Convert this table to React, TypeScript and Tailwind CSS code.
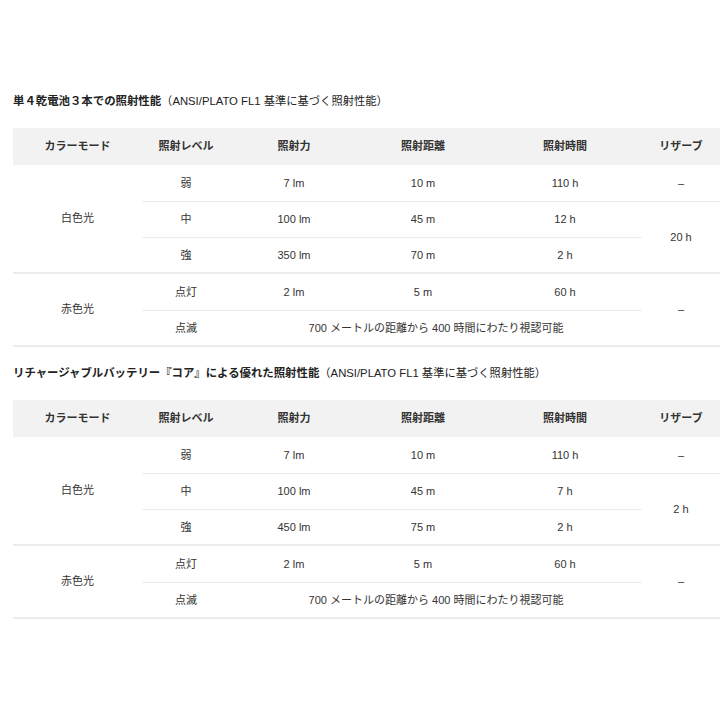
const font = { fontFamily: '"Liberation Sans", "Noto Sans CJK JP", sans-serif' }

const tables = [
  {
    bold: '単４乾電池３本での照射性能',
    rows: [
      ['弱', '7 lm', '10 m', '110 h'],
      ['中', '100 lm', '45 m', '12 h'],
      ['強', '350 lm', '70 m', '2 h'],
    ],
    reserve: '20 h',
  },
  {
    bold: 'リチャージャブルバッテリー『コア』による優れた照射性能',
    rows: [
      ['弱', '7 lm', '10 m', '110 h'],
      ['中', '100 lm', '45 m', '7 h'],
      ['強', '450 lm', '75 m', '2 h'],
    ],
    reserve: '2 h',
  },
]

const thin = 'border-b border-[#ebebeb]'
const thick = 'border-b-2 border-[#ebebeb]'

function PerfTable({ bold, rows, reserve }: { bold: string; rows: string[][]; reserve: string }) {
  return (
    <section>
      <h3 className="text-[11.4px] leading-[16px] text-[#222] mb-[19px]">
        <span className="font-bold">{bold}</span>
        <span className="text-[11.3px]">（ANSI/PLATO FL1 基準に基づく照射性能）</span>
      </h3>
      <table className="w-[707px] table-fixed border-collapse text-[11px] text-[#333] text-center">
        <colgroup>
          <col className="w-[129px]" />
          <col className="w-[88px]" />
          <col className="w-[128px]" />
          <col className="w-[130px]" />
          <col className="w-[154px]" />
          <col className="w-[78px]" />
        </colgroup>
        <thead>
          <tr className="bg-[#f2f2f2] h-[37px] font-bold">
            <th className="font-bold">カラーモード</th>
            <th className="font-bold">照射レベル</th>
            <th className="font-bold">照射力</th>
            <th className="font-bold">照射距離</th>
            <th className="font-bold">照射時間</th>
            <th className="font-bold">リザーブ</th>
          </tr>
        </thead>
        <tbody>
          {rows.map((r, i) => (
            <tr key={i} className="h-[36px]">
              {i === 0 && (
                <td rowSpan={3} className={thick}>
                  白色光
                </td>
              )}
              {r.map((c, j) => (
                <td key={j} className={i === 2 ? thick : thin}>
                  {c}
                </td>
              ))}
              {i === 0 && <td className={thin}>–</td>}
              {i === 1 && (
                <td rowSpan={2} className={thick}>
                  {reserve}
                </td>
              )}
            </tr>
          ))}
          <tr className="h-[37px]">
            <td rowSpan={2} className={thick}>
              赤色光
            </td>
            <td className={thin}>点灯</td>
            <td className={thin}>2 lm</td>
            <td className={thin}>5 m</td>
            <td className={thin}>60 h</td>
            <td rowSpan={2} className={thick}>
              –
            </td>
          </tr>
          <tr className="h-[36px]">
            <td className={thick}>点滅</td>
            <td colSpan={3} className={thick}>
              700 メートルの距離から 400 時間にわたり視認可能
            </td>
          </tr>
        </tbody>
      </table>
    </section>
  )
}

export default function App() {
  return (
    <div className="w-[720px] h-[720px] overflow-hidden bg-white pl-[13px] pt-[93px]" style={font}>
      <div className="flex flex-col gap-[18px]">
        {tables.map((t) => (
          <PerfTable key={t.bold} {...t} />
        ))}
      </div>
    </div>
  )
}
